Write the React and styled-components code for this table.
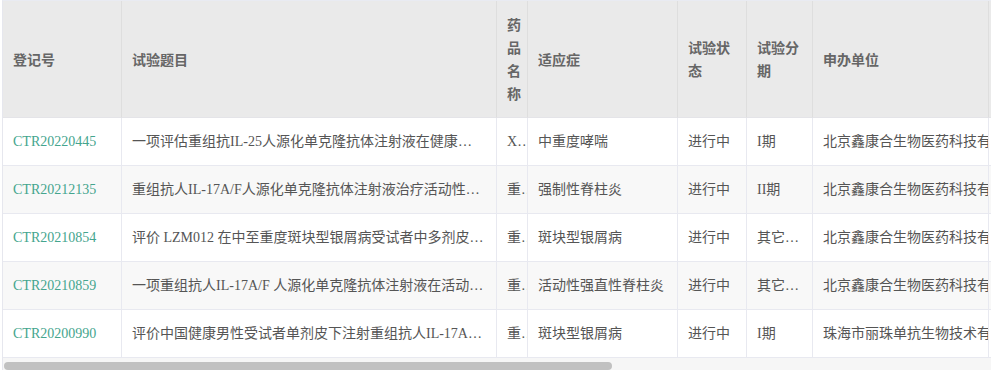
import React from 'react';
import styled, { createGlobalStyle } from 'styled-components';

const GlobalStyle = createGlobalStyle`
  html, body {
    margin: 0;
    padding: 0;
    background: #fff;
  }
`;

const columns = [
  { key: 'no', title: '登记号', width: 119 },
  { key: 'title', title: '试验题目', width: 375, pr: 12 },
  { key: 'drug', title: '药品名称', width: 31, pr: 0 },
  { key: 'ind', title: '适应症', width: 150 },
  { key: 'status', title: '试验状态', width: 69 },
  { key: 'phase', title: '试验分期', width: 66 },
  { key: 'sponsor', title: '申办单位', width: 176, clip: true },
  { key: 'date', title: '首次公示日期', width: 180 },
  { key: 'region', title: '试验范围', width: 200 },
  { key: 'pi', title: '主要研究者', width: 230 },
];

const rows = [
  {
    no: 'CTR20220445',
    title: '一项评估重组抗IL-25人源化单克隆抗体注射液在健康受试者中的安全性、耐受性、药代动力学研究',
    drug: 'XKH001注射液',
    ind: '中重度哮喘',
    status: '进行中',
    phase: 'I期',
    sponsor: '北京鑫康合生物医药科技有限公司',
    date: '2022-03-01',
    region: '国内试验',
    pi: '—',
  },
  {
    no: 'CTR20212135',
    title: '重组抗人IL-17A/F人源化单克隆抗体注射液治疗活动性强直性脊柱炎的研究',
    drug: '重组抗人IL-17A/F人源化单克隆抗体注射液',
    ind: '强制性脊柱炎',
    status: '进行中',
    phase: 'II期',
    sponsor: '北京鑫康合生物医药科技有限公司',
    date: '2021-09-02',
    region: '国内试验',
    pi: '—',
  },
  {
    no: 'CTR20210854',
    title: '评价 LZM012 在中至重度斑块型银屑病受试者中多剂皮下注射的有效性和安全性',
    drug: '重组抗人IL-17A/F人源化单克隆抗体注射液',
    ind: '斑块型银屑病',
    status: '进行中',
    phase: '其它说明',
    sponsor: '北京鑫康合生物医药科技有限公司',
    date: '2021-04-20',
    region: '国内试验',
    pi: '—',
  },
  {
    no: 'CTR20210859',
    title: '一项重组抗人IL-17A/F 人源化单克隆抗体注射液在活动性强直性脊柱炎患者中的研究',
    drug: '重组抗人IL-17A/F人源化单克隆抗体注射液',
    ind: '活动性强直性脊柱炎',
    status: '进行中',
    phase: '其它说明',
    sponsor: '北京鑫康合生物医药科技有限公司',
    date: '2021-04-22',
    region: '国内试验',
    pi: '—',
  },
  {
    no: 'CTR20200990',
    title: '评价中国健康男性受试者单剂皮下注射重组抗人IL-17A/F人源化单克隆抗体注射液的研究',
    drug: '重组抗人IL-17A/F人源化单克隆抗体注射液',
    ind: '斑块型银屑病',
    status: '进行中',
    phase: 'I期',
    sponsor: '珠海市丽珠单抗生物技术有限公司',
    date: '2020-06-01',
    region: '国内试验',
    pi: '—',
  },
];

const App = () => (
  <>
    <GlobalStyle />
    <Page>
      <Frame>
        <TableView>
          <Table>
            <colgroup>
              {columns.map((c) => (
                <col key={c.key} style={{ width: c.width }} />
              ))}
            </colgroup>
            <thead>
              <tr>
                {columns.map((c) => (
                  <HeadCell key={c.key}>{c.title}</HeadCell>
                ))}
              </tr>
            </thead>
            <tbody>
              {rows.map((r, i) => (
                <Row key={r.no} $striped={i % 2 === 1}>
                  {columns.map((c) => (
                    <Cell key={c.key} $pr={c.pr} $clip={c.clip}>
                      {c.key === 'no' ? <RegLink href="#">{r.no}</RegLink> : r[c.key]}
                    </Cell>
                  ))}
                </Row>
              ))}
            </tbody>
          </Table>
        </TableView>
        {/* horizontal scrollbar, drawn since headless hides the native one */}
        <ScrollTrack>
          <ScrollThumb />
        </ScrollTrack>
      </Frame>
    </Page>
  </>
);

export default App;

const Page = styled.div`
  padding-left: 2px;
`;

const Frame = styled.div`
  width: 989px;
  border-left: 1px solid #e6e7ee;
  border-top: 1px solid #e9ebf2;
`;

const TableView = styled.div`
  overflow: hidden;
`;

const Table = styled.table`
  width: 1596px;
  table-layout: fixed;
  border-collapse: separate;
  border-spacing: 0;
  background: #fff;
`;

const HeadCell = styled.th`
  box-sizing: border-box;
  padding: 12px 10px;
  background: #eaeaea;
  color: #666;
  font-family: "Noto Sans CJK SC", "Liberation Sans", sans-serif;
  font-size: 14px;
  font-weight: 700;
  line-height: 23px;
  text-align: left;
  vertical-align: middle;
  border-right: 1px solid #dedede;
  border-bottom: 1px solid #e4e4e8;
  word-break: break-all;
`;

const Row = styled.tr`
  background: ${(p) => (p.$striped ? '#f8f8f8' : '#fff')};
`;

const Cell = styled.td`
  box-sizing: border-box;
  height: 48px;
  padding: 0 ${(p) => (p.$pr ?? 10)}px 0 10px;
  color: #555;
  font-family: "Liberation Serif", "Noto Sans CJK SC", serif;
  font-size: 14px;
  line-height: 20px;
  vertical-align: middle;
  white-space: nowrap;
  overflow: hidden;
  text-overflow: ${(p) => (p.$clip ? 'clip' : 'ellipsis')};
  border-right: 1px solid #e8e9f0;
  border-bottom: 1px solid #e8e9f0;
`;

const RegLink = styled.a`
  color: #44a58e;
  text-decoration: none;
`;

const ScrollTrack = styled.div`
  display: flex;
  height: 13px;
  padding: 4px 0 0 1px;
  box-sizing: border-box;
  background: #f6f6f6;
`;

const ScrollThumb = styled.div`
  width: 608px;
  height: 8px;
  border-radius: 4px;
  background: #c1c1c1;
`;
